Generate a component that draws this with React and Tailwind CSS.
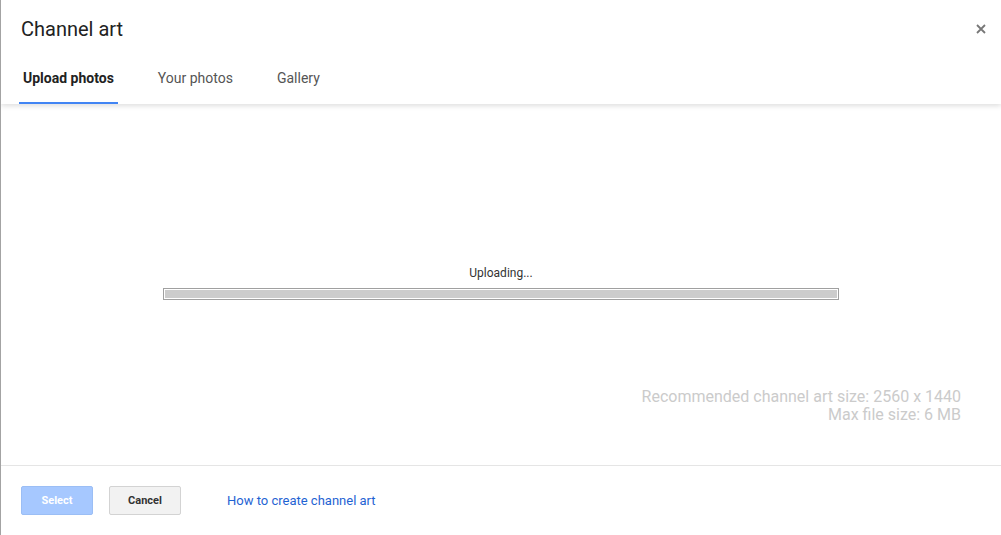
import React from 'react'

export default function App() {
  return (
    <div className="w-[1001px] h-[535px] bg-white border-l border-[#a3a3a3] flex flex-col overflow-hidden" style={{ fontFamily: 'Roboto, "Liberation Sans", sans-serif' }}>
      {/* Header */}
      <div className="relative z-10 h-[104px] shrink-0 shadow-[0_2px_5px_rgba(0,0,0,0.13)] pt-[17px]">
        <div className="flex items-center justify-between pl-[20px] pr-[14px]">
          <h1 className="text-[20px] leading-[24px] text-[#222]">Channel art</h1>
          <button className="w-[12px] h-[12px] flex items-center justify-center text-[#777]">
            <svg width="10" height="10" viewBox="0 0 10 10">
              <path d="M1 1L9 9M9 1L1 9" stroke="currentColor" strokeWidth="1.8" />
            </svg>
          </button>
        </div>
        <div className="flex mt-[27px] pl-[18px] text-[14px]">
          <div className="px-[4px] leading-[20px] pb-[14px] border-b-2 border-[#4285f4] font-bold text-[#222]">Upload photos</div>
          <div className="ml-[36px] px-[4px] leading-[20px] pb-[14px] text-[#555]">Your photos</div>
          <div className="ml-[36px] px-[4px] leading-[20px] pb-[14px] text-[#555]">Gallery</div>
        </div>
      </div>

      {/* Body */}
      <div className="h-[361px] shrink-0 flex flex-col">
        <div className="pt-[161px] flex flex-col items-center">
          <div className="text-[12px] leading-[16px] text-[#333]">Uploading...</div>
          <div className="mt-[7px] w-[676px] h-[12px] border border-[#a0a0a0] p-px">
            <div className="w-full h-full bg-[#cccccc]" />
          </div>
        </div>
        <div className="mt-[88px] pr-[40px] text-right text-[16px] leading-[18px] text-[#cbcbcb]">
          <div>Recommended channel art size: 2560 x 1440</div>
          <div>Max file size: 6 MB</div>
        </div>
      </div>

      {/* Footer */}
      <div className="flex-1 border-t border-[#e5e5e5] flex items-start pt-[20px] pl-[20px]">
        <button className="w-[72px] h-[29px] pt-px rounded-[2px] bg-[#a6c8ff] border border-[#9bbef5] text-white text-[11px] font-bold">Select</button>
        <button className="ml-[16px] w-[72px] h-[29px] pt-px rounded-[2px] bg-[#f2f2f2] border border-[#d3d3d3] text-[#333] text-[11px] font-bold">Cancel</button>
        <a className="ml-[46px] h-[29px] pt-px leading-[28px] text-[13px] text-[#1f63d3]">How to create channel art</a>
      </div>
    </div>
  )
}
